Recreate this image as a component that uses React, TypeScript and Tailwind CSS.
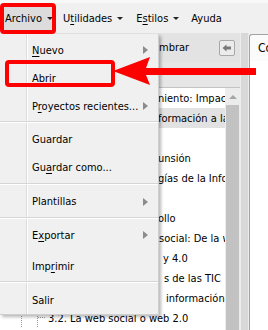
import React from 'react';

type MenuItem = { label?: string; u?: number; sub?: boolean; sep?: boolean; gap?: boolean };

const menu: MenuItem[] = [
  { label: 'Nuevo', u: 0, sub: true },
  { label: 'Abrir' },
  { label: 'Proyectos recientes...', u: 1, sub: true },
  { sep: true },
  { label: 'Guardar' },
  { label: 'Guardar como...', u: 2 },
  { sep: true },
  { label: 'Plantillas', sub: true },
  { sep: true },
  { label: 'Exportar', u: 1, sub: true },
  { label: 'Imprimir', u: 3, gap: true },
  { sep: true },
  { label: 'Salir' },
];

// only the tail of each outline row shows past the open menu
const rows = [
  { text: 'niento: Impacto de las TIC', pl: 'pl-[158px]' },
  { text: 'formación a la sociedad del conocimiento', pl: 'pl-[158px]', active: true },
  { text: '', pl: 'pl-[158px]' },
  { text: 'unsión', pl: 'pl-[158px]' },
  { text: 'gías de la Información y la Comunicación', pl: 'pl-[158px]' },
  { text: '', pl: 'pl-[158px]' },
  { text: 'ollo', pl: 'pl-[158px]' },
  { text: 'social: De la web 1.0 a la web 4.0', pl: 'pl-[159px]' },
  { text: 'y 4.0', pl: 'pl-[163px]' },
  { text: 's de las TIC', pl: 'pl-[164px]' },
  { text: 'información', pl: 'pl-[166px]' },
];

function Label({ text, u }: { text: string; u?: number }) {
  if (u === undefined) return <>{text}</>;
  return (
    <>
      {text.slice(0, u)}
      <span className="underline decoration-1 underline-offset-[2px]">{text[u]}</span>
      {text.slice(u + 1)}
    </>
  );
}

function Caret() {
  return <span className="ml-[5px] mt-[1px] h-0 w-0 border-x-[3px] border-t-[3px] border-x-transparent border-t-[#222]" />;
}

export default function App() {
  return (
    <div className="relative h-[330px] w-[268px] overflow-hidden bg-[#f0f0f0] font-['DejaVu_Sans_Condensed','DejaVu_Sans',sans-serif] text-[11px] leading-none text-black [font-stretch:condensed]">
      {/* menu bar */}
      <div className="flex h-[33px] items-center border-t-[3px] border-[#f8f8f8]">
        <div className="ml-[4px] flex h-[23px] w-[48px] items-center bg-[#dcdcdc] pl-[1px]">
          Archivo
          <Caret />
        </div>
        <div className="ml-[11px] flex items-center">
          <Label text="Utilidades" u={1} />
          <Caret />
        </div>
        <div className="ml-[13px] flex items-center">
          <Label text="Estilos" u={1} />
          <Caret />
        </div>
        <div className="ml-[12px]">Ayuda</div>
      </div>

      {/* panels */}
      <div className="flex h-[297px]">
        <div className="flex w-[240px] shrink-0 flex-col">
          <div className="flex h-[29px] items-center bg-[#e3e3e3]">
            <span className="pl-[159px]">mbrar</span>
            <div className="ml-auto mr-[5px] flex h-[16px] w-[16px] items-center justify-center rounded-[2px] border border-[#a9a9a9] bg-[#ececec]">
              <svg width="10" height="8" viewBox="0 0 10 8">
                <path d="M0.5 4 L4.5 0.5 L4.5 2.5 L9 2.5 L9 5.5 L4.5 5.5 L4.5 7.5 Z" fill="#7a7a7a" />
              </svg>
            </div>
          </div>
          <div className="h-[26px] border-b border-[#c4c4c4] bg-[#e6e6e6]" />
          <div className="flex flex-1 overflow-hidden">
            <div className="min-w-0 flex-1 overflow-hidden whitespace-nowrap bg-white">
              {rows.map((r, i) => (
                <div key={i} className={`flex h-[20px] items-center ${r.pl} ${r.active ? 'bg-[#e2e2e2]' : ''}`}>
                  {r.text}
                </div>
              ))}
              <div className="flex h-[20px] items-center">
                <svg width="48" height="20" viewBox="0 0 48 20" className="shrink-0">
                  <line x1="21.5" y1="0" x2="21.5" y2="20" stroke="#9a9a9a" strokeDasharray="1 1" />
                  <line x1="37.5" y1="0" x2="37.5" y2="20" stroke="#9a9a9a" strokeDasharray="1 1" />
                  <line x1="38" y1="9.5" x2="46" y2="9.5" stroke="#9a9a9a" strokeDasharray="1 1" />
                </svg>
                3.2. La web social o web 2.0
              </div>
            </div>
            <div className="flex w-[15px] shrink-0 flex-col bg-[#ececec]">
              <div className="flex h-[17px] items-center justify-center">
                <span className="h-0 w-0 border-x-[4px] border-b-[4px] border-x-transparent border-b-[#a6a6a6]" />
              </div>
              <div className="mx-[1px] flex-1 bg-[#c2c2c2]" />
            </div>
          </div>
        </div>
        <div className="w-[9px] shrink-0 border-x border-[#ececec] bg-[#d8d8d8]" />
        <div className="flex min-w-0 flex-1 flex-col bg-[#f0f0f0]">
          <div className="flex h-[28px] items-end pt-[1px]">
            <div className="flex h-[27px] min-w-0 flex-1 items-center overflow-hidden whitespace-nowrap rounded-tl-[3px] border-l border-t border-[#a3a3a3] bg-[#fbfbfb] pl-[8px] text-[12px]">
              Contenido
            </div>
          </div>
          <div className="flex-1 border-l border-[#a3a3a3] bg-white" />
        </div>
      </div>

      {/* open Archivo menu */}
      <div className="absolute left-0 top-[34px] flex h-[281px] w-[159px] flex-col border-r border-b border-[#cfcfcf] bg-[#f0f0f0] pt-[2px] shadow-[2px_2px_3px_rgba(0,0,0,0.28)]">
        <div className="absolute bottom-0 left-[26px] top-0 w-[2px] border-l border-[#dcdcdc] bg-white" />
        {menu.map((m, i) =>
          m.sep ? (
            <div key={i} className="relative flex h-[6px] items-start pt-[1px]">
              <div className="h-[2px] w-full border-t border-[#d6d6d6] bg-white" />
            </div>
          ) : (
            <div key={i} className={`relative flex h-[28px] shrink-0 items-center pl-[32px] pr-[10px] ${m.gap ? 'mt-[3px]' : ''}`}>
              <span><Label text={m.label!} u={m.u} /></span>
              {m.sub && (
                <span className="ml-auto h-0 w-0 border-y-[4px] border-l-[5px] border-y-transparent border-l-[#8c8c8c]" />
              )}
            </div>
          )
        )}
      </div>

      {/* callouts */}
      <div className="absolute left-0 top-[3px] h-[31px] w-[56px] rounded-[4px] border-[4px] border-[#ff0000]" />
      <div className="absolute left-[5px] top-[60px] h-[27px] w-[110px] rounded-[4px] border-[4px] border-[#ff0000]" />
      <svg className="absolute left-[110px] top-[54px]" width="150" height="34" viewBox="0 0 150 34">
        <polygon points="3,17 40,3 36,14 146,14 146,21 36,21 40,31" fill="#ff0000" />
      </svg>
    </div>
  );
}
